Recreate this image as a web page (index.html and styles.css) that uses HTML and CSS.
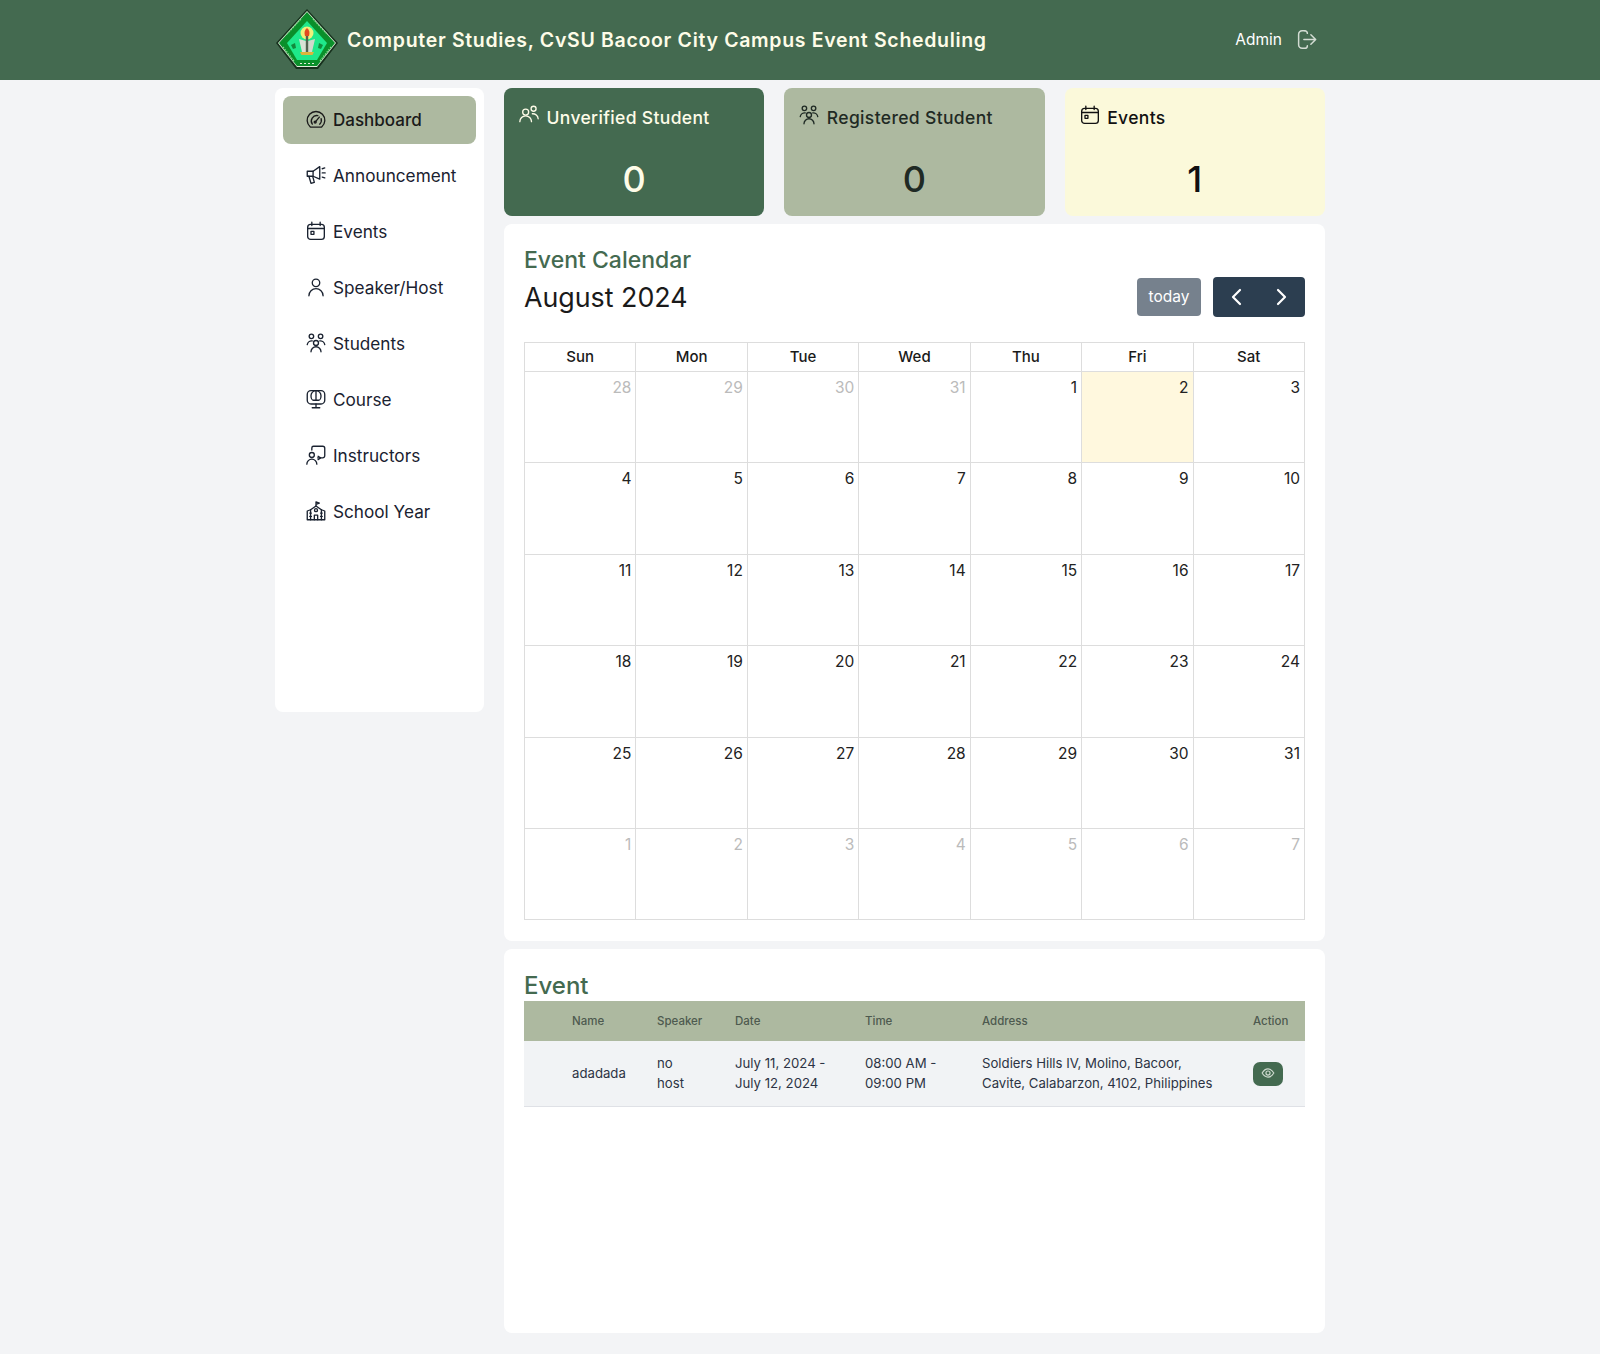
FILE: index.html
```html
<!DOCTYPE html>
<html lang="en">
<head>
  <meta charset="UTF-8">
  <title>Computer Studies Event Scheduling</title>
  <link rel="stylesheet" href="styles.css">
</head>
<body>
  <svg class="defs" width="0" height="0">
    <symbol id="i-gauge" viewBox="0 0 24 24"><path d="M5.2 20.5a10.6 10.6 0 1 1 13.6 0z"/><path d="M7.6 17a6.6 6.6 0 0 1 6.6-10.3"/><path d="M18.2 10.5a6.6 6.6 0 0 1-1.8 6.5"/><path d="M11 14.5l5-6"/><circle cx="11" cy="14.5" r="1.2"/></symbol>
    <symbol id="i-mega" viewBox="0 0 24 24"><path d="M1.5 7.500h7L16.500 2v15l-8-3.500h-7z"/><path d="M8.500 7.500v6"/><path d="M3.500 13.500l2.500 8.500l4-1.200l-1.800-6.500"/><path d="M19.500 4.500l3-1M19.500 9.500h3.500M19.500 14.500l3 1"/></symbol>
    <symbol id="i-cal" viewBox="0 0 24 24"><rect x="2" y="4" width="20" height="18" rx="3.500"/><path d="M2 9h20M7 1.500v4M17 1.500v4"/><rect x="6" y="12.500" width="3.500" height="3.500"/></symbol>
    <symbol id="i-user" viewBox="0 0 24 24"><circle cx="12" cy="7" r="4.500"/><path d="M3.500 22.500a8.500 8.500 0 0 1 17 0"/></symbol>
    <symbol id="i-users" viewBox="0 0 24 24"><circle cx="8" cy="8.500" r="3.600"/><circle cx="17.500" cy="4.500" r="3"/><path d="M1 20a7 7 0 0 1 14 0"/><path d="M16 10.500a6.500 6.500 0 0 1 7 6"/></symbol>
    <symbol id="i-group" viewBox="0 0 24 24"><circle cx="6.500" cy="4" r="2.700"/><circle cx="17.500" cy="4" r="2.700"/><circle cx="12" cy="12" r="3"/><path d="M1.500 14a5.500 5.500 0 0 1 6-4.500M22.500 14a5.500 5.500 0 0 0-6-4.500"/><path d="M6 22.500a6 6 0 0 1 12 0"/></symbol>
    <symbol id="i-course" viewBox="0 0 24 24"><path d="M6 2h12a4.500 4.500 0 0 1 4.500 4.500v7a4.500 4.500 0 0 1-4.500 4.500H6a4.500 4.500 0 0 1-4.500-4.500v-7A4.500 4.500 0 0 1 6 2z"/><path d="M6 8a6 6 0 0 1 12 0c0 3-1.500 5.500-3 5.500H9C7.500 13.500 6 11 6 8z"/><path d="M12 2v11.500M12 18v4M7.500 22.500h9"/></symbol>
    <symbol id="i-instr" viewBox="0 0 24 24"><path d="M7 6V3.500A2 2 0 0 1 9 1.500h11a2.500 2.500 0 0 1 2.500 2.500v9a2.500 2.500 0 0 1-2.500 2.500h-6"/><circle cx="7" cy="12" r="3"/><path d="M1 23a6 6 0 0 1 12 0"/><path d="M14.500 13.500l3 2-3 2"/></symbol>
    <symbol id="i-school" viewBox="0 0 24 24"><path d="M12 6V1l4 1.500-4 1.500"/><path d="M1.500 22.500V12l4-1.500L12 6l6.500 4.500 4 1.500v10.500z"/><circle cx="12" cy="11" r="1.800"/><path d="M10 22.500v-5.500h4v5.500M4.500 14.500h2M4.500 18.500h2M17.500 14.500h2M17.500 18.500h2M5.500 10.500v12M18.500 10.500v12"/></symbol>
  </svg>

  <header class="topbar">
    <div class="topbar-inner">
      <div class="brand">
        <svg class="logo" viewBox="0 0 62 62">
          <polygon points="31,0 62,34 42,60 20,60 0,34" fill="#16301c"/>
          <polygon points="31,2 60,34 41,58 21,58 2,34" fill="#dfeeda"/>
          <polygon points="31,3 59,34 41,57 21,57 3,34" fill="#0a8f2a"/>
          <polygon points="31,12 51,34 41,51 21,51 11,34" fill="#1ee88a"/>
          <circle cx="31" cy="24" r="6.500" fill="#eef07a"/>
          <path d="M31 19c2.500 2 3 4.500 2 8h-4c-1-3.500-.5-6 2-8z" fill="#e2491f"/>
          <path d="M23 30l7 2v11h-4z" fill="#d9e2d6"/>
          <path d="M39 30l-7 2v11h4z" fill="#cfd9cc"/>
          <path d="M29.800 27h2.400v16h-2.400z" fill="#51614f"/>
          <path d="M24 43h14l-1.500 3h-11z" fill="#dcb43c"/>
          <path d="M15 36l4-2 1 5-3 1zM47 36l-4-2-1 5 3 1z" fill="#128a3c"/>
          <path d="M24 54.500h14" stroke="#dfeeda" stroke-width="1" stroke-dasharray="2 2"/>
          <path d="M11 25l14-15M37 10l14 15M7 38l11 14M55 38l-11 14" stroke="#86d68e" stroke-width="1.300" stroke-dasharray="1.500 1.200"/>
        </svg>
        <span class="brand-name">Computer Studies, CvSU Bacoor City Campus Event Scheduling</span>
      </div>
      <div class="user">
        <span>Admin</span>
        <svg class="logout" viewBox="0 0 24 24"><path d="M10 2H7a4 4 0 0 0-4 4v12a4 4 0 0 0 4 4h3a3 3 0 0 0 3-3"/><path d="M13 5a3 3 0 0 0-3-3"/><path d="M9 12h13M17 6.500l5.500 5.500-5.500 5.500"/></svg>
      </div>
    </div>
  </header>

  <div class="wrap">
    <nav class="sidebar">
      <a class="nav-item active" href="#"><svg class="ico"><use href="#i-gauge"/></svg>Dashboard</a>
      <a class="nav-item" href="#"><svg class="ico"><use href="#i-mega"/></svg>Announcement</a>
      <a class="nav-item" href="#"><svg class="ico"><use href="#i-cal"/></svg>Events</a>
      <a class="nav-item" href="#"><svg class="ico"><use href="#i-user"/></svg>Speaker/Host</a>
      <a class="nav-item" href="#"><svg class="ico"><use href="#i-group"/></svg>Students</a>
      <a class="nav-item" href="#"><svg class="ico"><use href="#i-course"/></svg>Course</a>
      <a class="nav-item" href="#"><svg class="ico"><use href="#i-instr"/></svg>Instructors</a>
      <a class="nav-item" href="#"><svg class="ico"><use href="#i-school"/></svg>School Year</a>
    </nav>

    <main class="main">
      <section class="stats">
        <div class="stat stat-green">
          <div class="stat-head"><svg class="ico"><use href="#i-users"/></svg>Unverified Student</div>
          <div class="stat-value">0</div>
        </div>
        <div class="stat stat-sage">
          <div class="stat-head"><svg class="ico"><use href="#i-group"/></svg>Registered Student</div>
          <div class="stat-value">0</div>
        </div>
        <div class="stat stat-cream">
          <div class="stat-head"><svg class="ico"><use href="#i-cal"/></svg>Events</div>
          <div class="stat-value">1</div>
        </div>
      </section>

      <section class="panel calendar">
        <h2 class="panel-title">Event Calendar</h2>
        <div class="cal-toolbar">
          <div class="cal-month">August 2024</div>
          <div class="cal-buttons">
            <button class="btn-today">today</button>
            <div class="btn-nav">
              <svg viewBox="0 0 24 24"><path d="M15 5l-7 7 7 7"/></svg>
              <svg viewBox="0 0 24 24"><path d="M9 5l7 7-7 7"/></svg>
            </div>
          </div>
        </div>
        <table class="cal-grid">
          <thead>
            <tr><th>Sun</th><th>Mon</th><th>Tue</th><th>Wed</th><th>Thu</th><th>Fri</th><th>Sat</th></tr>
          </thead>
          <tbody>
            <tr><td class="other">28</td><td class="other">29</td><td class="other">30</td><td class="other">31</td><td>1</td><td class="today">2</td><td>3</td></tr>
            <tr><td>4</td><td>5</td><td>6</td><td>7</td><td>8</td><td>9</td><td>10</td></tr>
            <tr><td>11</td><td>12</td><td>13</td><td>14</td><td>15</td><td>16</td><td>17</td></tr>
            <tr><td>18</td><td>19</td><td>20</td><td>21</td><td>22</td><td>23</td><td>24</td></tr>
            <tr><td>25</td><td>26</td><td>27</td><td>28</td><td>29</td><td>30</td><td>31</td></tr>
            <tr><td class="other">1</td><td class="other">2</td><td class="other">3</td><td class="other">4</td><td class="other">5</td><td class="other">6</td><td class="other">7</td></tr>
          </tbody>
        </table>
      </section>

      <section class="panel events">
        <h2 class="panel-title">Event</h2>
        <table class="ev-table">
          <thead>
            <tr><th class="c-blank"></th><th class="c-name">Name</th><th class="c-speaker">Speaker</th><th class="c-date">Date</th><th class="c-time">Time</th><th class="c-addr">Address</th><th class="c-act">Action</th></tr>
          </thead>
          <tbody>
            <tr>
              <td></td>
              <td>adadada</td>
              <td>no<br>host</td>
              <td>July 11, 2024 -<br>July 12, 2024</td>
              <td>08:00 AM -<br>09:00 PM</td>
              <td>Soldiers Hills IV, Molino, Bacoor,<br>Cavite, Calabarzon, 4102, Philippines</td>
              <td><button class="btn-view"><svg viewBox="0 0 24 24"><path d="M2 12c3-5 6-7 10-7s7 2 10 7c-3 5-6 7-10 7s-7-2-10-7z"/><circle cx="12" cy="12" r="3.500"/></svg></button></td>
            </tr>
          </tbody>
        </table>
      </section>
    </main>
  </div>
</body>
</html>
```

FILE: styles.css
```css
* {
  box-sizing: border-box;
}
html,
body {
  margin: 0;
  padding: 0;
}
body {
  background-color: #f3f4f6;
  font-family: Inter, "Noto Sans", sans-serif;
  color: #1a1a1a;
}
.defs {
  position: absolute;
}
.ico {
  width: 20px;
  height: 20px;
  flex: none;
  fill: none;
  stroke: currentColor;
  stroke-width: 1.6;
  stroke-linecap: round;
  stroke-linejoin: round;
}

/* top bar */
.topbar {
  height: 80px;
  background-color: #446a50;
  color: #fefce8;
}
.topbar-inner {
  width: 1050px;
  height: 100%;
  margin: 0 auto;
  display: flex;
  align-items: center;
  justify-content: space-between;
}
.brand {
  display: flex;
  align-items: center;
  gap: 9px;
}
.logo {
  width: 62px;
  height: 62px;
  margin-left: 1px;
}
.brand-name {
  font-size: 19.5px;
  font-weight: 600;
  letter-spacing: 0.68px;
}
.user {
  display: flex;
  align-items: center;
  gap: 14px;
  margin-right: 8px;
  margin-bottom: 2px;
  color: #fff;
  font-size: 15.5px;
}
.logout {
  width: 21px;
  height: 21px;
  fill: none;
  stroke: #d3dcd3;
  stroke-width: 1.7;
  stroke-linecap: round;
  stroke-linejoin: round;
}

/* layout */
.wrap {
  width: 1050px;
  margin: 8px auto 21px;
  display: flex;
  align-items: flex-start;
  gap: 20px;
}
.sidebar {
  width: 209px;
  height: 624px;
  padding: 8px;
  background-color: #fff;
  border-radius: 8px;
  display: flex;
  flex-direction: column;
  gap: 8px;
}
.nav-item {
  height: 48px;
  padding: 0 0 2px 23px;
  display: flex;
  align-items: center;
  gap: 7px;
  border-radius: 8px;
  color: #1a2230;
  font-size: 17.2px;
  text-decoration: none;
}
.nav-item.active {
  padding-bottom: 0;
  background-color: #adb9a0;
  color: #1a1a1a;
  font-weight: 500;
  font-size: 17px;
}
.main {
  width: 821px;
  display: flex;
  flex-direction: column;
  gap: 8px;
}

/* stat cards */
.stats {
  display: grid;
  grid-template-columns: repeat(3, 1fr);
  gap: 20px;
}
.stat {
  height: 128px;
  padding: 16px 15px;
  border-radius: 8px;
}
.stat-head {
  display: flex;
  align-items: flex-start;
  gap: 7.5px;
  font-size: 17.5px;
  font-weight: 500;
  line-height: 28px;
  letter-spacing: 0.35px;
}
.stat-head .ico {
  margin-top: 1px;
}
.stat-value {
  margin-top: 27px;
  text-align: center;
  font-size: 36px;
  font-weight: 500;
  line-height: 40px;
}
.stat-green {
  background-color: #446a50;
  color: #fefce8;
}
.stat-sage {
  background-color: #adb9a0;
  color: #1f2a24;
}
.stat-cream {
  background-color: #fbf9da;
  color: #111;
}

/* panels */
.panel {
  padding: 20px;
  background-color: #fff;
  border-radius: 8px;
}
.panel-title {
  margin: 0;
  color: #446a50;
  font-size: 23px;
  font-weight: 500;
  line-height: 32px;
}
.calendar {
  height: 717px;
}
.cal-toolbar {
  display: flex;
  align-items: center;
  justify-content: space-between;
  height: 41px;
  margin-bottom: 25px;
}
.cal-month {
  padding-top: 1px;
  font-size: 26.8px;
  line-height: 34px;
}
.cal-buttons {
  display: flex;
  align-items: center;
  gap: 12px;
}
.btn-today {
  width: 64px;
  height: 38px;
  padding: 0;
  border: 0;
  border-radius: 4px;
  background-color: #76818d;
  color: #fff;
  font-family: inherit;
  font-size: 15.5px;
}
.btn-nav {
  width: 92px;
  height: 40px;
  padding: 0 12px;
  display: flex;
  align-items: center;
  justify-content: space-between;
  border-radius: 4px;
  background-color: #2c3e50;
}
.btn-nav svg {
  width: 24px;
  height: 24px;
  fill: none;
  stroke: #fff;
  stroke-width: 2.200;
  stroke-linecap: round;
  stroke-linejoin: round;
}
.cal-grid {
  width: 781px;
  table-layout: fixed;
  border-collapse: collapse;
  font-size: 15.5px;
}
.cal-grid th,
.cal-grid td {
  border: 1px solid #ddd;
}
.cal-grid th {
  height: 29px;
  padding: 0 0 2px;
  font-weight: 500;
  font-size: 15px;
}
.cal-grid td {
  height: 91.400px;
  padding: 6px 4px;
  text-align: right;
  vertical-align: top;
  line-height: 20px;
  color: #222;
}
.cal-grid td.other {
  color: #bbb;
}
.cal-grid td.today {
  background-color: #fff8de;
}

/* event table */
.events {
  height: 384px;
}
.events .panel-title {
  height: 32px;
  padding-top: 1px;
  font-size: 24px;
}
.ev-table {
  width: 781px;
  table-layout: fixed;
  border-collapse: collapse;
  line-height: 20px;
}
.ev-table th {
  height: 40px;
  padding: 0 16px;
  text-align: left;
  background-color: #adb9a0;
  color: #4d5a4f;
  font-size: 11.500px;
  font-weight: 500;
}
.ev-table td {
  height: 65px;
  padding: 0 16px;
  background-color: #f1f3f5;
  border-bottom: 1px solid #dfe1e6;
  color: #2c3344;
  font-size: 13.200px;
}
.c-blank {
  width: 32px;
}
.c-name {
  width: 85px;
}
.c-speaker {
  width: 78px;
}
.c-date {
  width: 130px;
}
.c-time {
  width: 117px;
}
.c-addr {
  width: 271px;
}
.c-act {
  width: 68px;
}
.btn-view {
  width: 30px;
  height: 24px;
  margin-top: 1px;
  padding: 0;
  display: block;
  border: 0;
  border-radius: 7px;
  background-color: #446a50;
}
.btn-view svg {
  width: 14px;
  height: 14px;
  margin-top: 2px;
  fill: none;
  stroke: #cfdacf;
  stroke-width: 2;
}
```
